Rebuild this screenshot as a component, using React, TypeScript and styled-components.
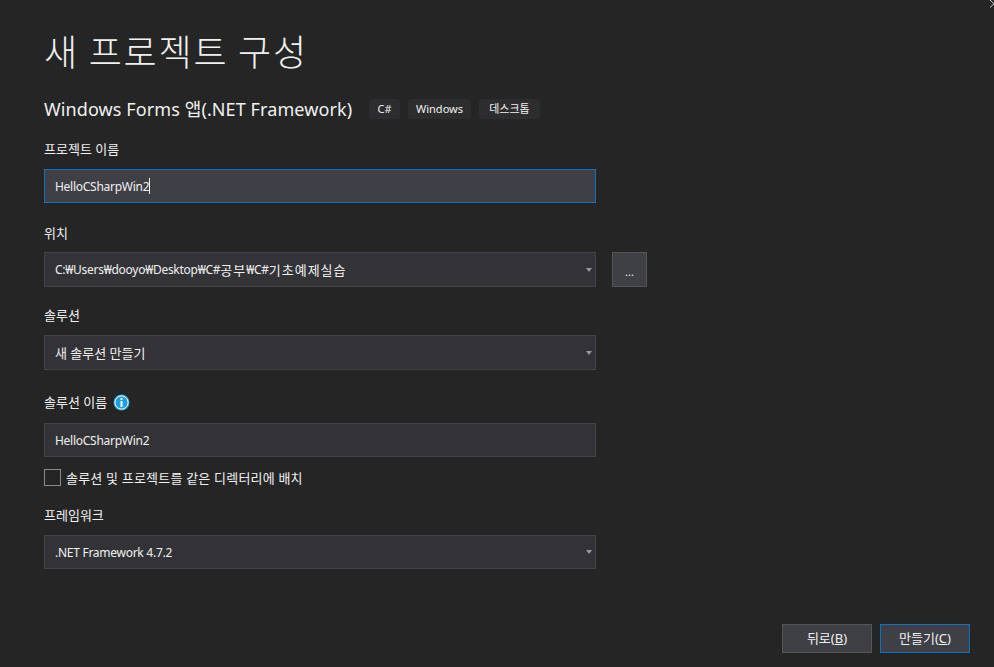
import styled, { createGlobalStyle } from "styled-components";

// styling
const GlobalStyle = createGlobalStyle`
  html, body {
    margin: 0;
    padding: 0;
    background: #252526;
  }
  body {
    font-family: "Noto Sans", "Noto Sans CJK KR", sans-serif;
    color: #f1f1f1;
  }
`;

const Page = styled.div`
  position: relative;
  width: 994px;
  height: 667px;
  box-sizing: border-box;
  padding: 26px 24px 14px 44px;
  display: flex;
  flex-direction: column;
  overflow: hidden;
  background: #252526;
`;

const CloseIcon = styled.svg`
  position: absolute;
  top: 0;
  right: 0;
  width: 8px;
  height: 10px;
`;

const Title = styled.h1`
  margin: 0;
  height: 46px;
  font-size: 36px;
  line-height: 48px;
  font-weight: 300;
  letter-spacing: 1.8px;
  font-family: "Noto Sans CJK KR", sans-serif;
`;

const TemplateRow = styled.div`
  display: flex;
  align-items: center;
  height: 24px;
  margin-top: 25px;
`;

const TemplateName = styled.div`
  width: 309px;
  font-size: 18px;
  line-height: 24px;
  margin-right: 16px;
  letter-spacing: 0.1px;
  white-space: nowrap;
`;

const Tag = styled.div<{ $width: number }>`
  width: ${(p) => p.$width}px;
  height: 20px;
  line-height: 20px;
  text-align: center;
  margin-right: 8px;
  border-radius: 3px;
  background: #2d2d30;
  font-size: 11px;
`;

const Label = styled.div<{ $top: number; $bottom?: number }>`
  display: flex;
  align-items: center;
  gap: 6px;
  height: 18px;
  line-height: 18px;
  margin-top: ${(p) => p.$top}px;
  margin-bottom: ${(p) => p.$bottom ?? 9}px;
  font-size: 13px;
`;

const FieldRow = styled.div`
  display: flex;
  align-items: center;
  gap: 16px;
`;

const Field = styled.div<{ $height: number; $focused?: boolean }>`
  position: relative;
  width: 552px;
  height: ${(p) => p.$height}px;
  box-sizing: border-box;
  display: flex;
  align-items: center;
  padding: 0 10px;
  font-size: 12px;
  letter-spacing: -0.27px;
  white-space: pre;
  background: ${(p) => (p.$focused ? "#3f3f46" : "#333337")};
  border: 1px solid ${(p) => (p.$focused ? "#0e70c0" : "#434346")};
`;

const Hangul = styled.span<{ $spacing: number }>`
  font-size: 13px;
  letter-spacing: ${(p) => p.$spacing}px;
`;

const Caret = styled.span`
  display: inline-block;
  width: 1px;
  height: 16px;
  background: #f1f1f1;
`;

const Arrow = styled.span`
  position: absolute;
  right: 3px;
  top: 50%;
  margin-top: -2px;
  width: 0;
  height: 0;
  border-left: 3.5px solid transparent;
  border-right: 3.5px solid transparent;
  border-top: 4px solid #999999;
`;

const BrowseButton = styled.div`
  width: 35px;
  height: 35px;
  box-sizing: border-box;
  display: flex;
  align-items: center;
  justify-content: center;
  padding-top: 3px;
  font-size: 11px;
  background: #3f3f46;
  border: 1px solid #555555;
`;

const CheckRow = styled.div`
  display: flex;
  align-items: center;
  gap: 5px;
  height: 18px;
  margin-top: 11px;
  font-size: 13px;
  letter-spacing: 0.2px;
`;

const Checkbox = styled.span`
  width: 17px;
  height: 17px;
  box-sizing: border-box;
  border: 1px solid #8a8a8a;
`;

const Footer = styled.div`
  display: flex;
  justify-content: flex-end;
  gap: 8px;
  margin-top: auto;
`;

const Button = styled.div<{ $primary?: boolean }>`
  width: 90px;
  height: 29px;
  box-sizing: border-box;
  display: flex;
  align-items: center;
  justify-content: center;
  padding-bottom: 2px;
  font-size: 13px;
  background: #3f3f46;
  border: 1px solid ${(p) => (p.$primary ? "#0e70c0" : "#555555")};
`;

const AccessKey = styled.span`
  text-decoration: underline;
`;

function InfoIcon() {
  return (
    <svg width="17" height="17" viewBox="0 0 17 17">
      <circle cx="8.5" cy="8.5" r="8" fill="#1f9ee3" />
      <circle cx="8.5" cy="8.5" r="6.6" fill="none" stroke="#ffffff" strokeWidth="1" />
      <rect x="7.5" y="7" width="2" height="6" fill="#ffffff" />
      <rect x="7.5" y="4" width="2" height="2" fill="#ffffff" />
    </svg>
  );
}

function App() {
  return (
    <>
      <GlobalStyle />
      <Page>
        <CloseIcon viewBox="0 0 8 10">
          <path d="M4 0L8 3.7L4 7.5" stroke="#d8d8d8" strokeWidth="1" fill="none" />
        </CloseIcon>
        <Title>새 프로젝트 구성</Title>
        <TemplateRow>
          <TemplateName>Windows Forms 앱(.NET Framework)</TemplateName>
          <Tag $width={31}>C#</Tag>
          <Tag $width={63}>Windows</Tag>
          <Tag $width={61}>데스크톱</Tag>
        </TemplateRow>

        <Label $top={19} $bottom={11}>프로젝트 이름</Label>
        <Field $height={34} $focused>
          HelloCSharpWin2
          <Caret />
        </Field>

        <Label $top={21} $bottom={10}>위치</Label>
        <FieldRow>
          <Field $height={35}>
            C:₩Users₩dooyo₩Desktop₩C#<Hangul $spacing={1}>공부</Hangul>₩C#<Hangul $spacing={1}>기초예제실습</Hangul>
            <Arrow />
          </Field>
          <BrowseButton>...</BrowseButton>
        </FieldRow>

        <Label $top={19} $bottom={11}>솔루션</Label>
        <Field $height={35}>
          <Hangul $spacing={0}>새 솔루션 만들기</Hangul>
          <Arrow />
        </Field>

        <Label $top={23} $bottom={12}>솔루션 이름 <InfoIcon /></Label>
        <Field $height={34}>HelloCSharpWin2</Field>

        <CheckRow>
          <Checkbox />
          솔루션 및 프로젝트를 같은 디렉터리에 배치
        </CheckRow>

        <Label $top={20} $bottom={11}>프레임워크</Label>
        <Field $height={34}>
          .NET Framework 4.7.2
          <Arrow />
        </Field>

        <Footer>
          <Button>뒤로(<AccessKey>B</AccessKey>)</Button>
          <Button $primary>만들기(<AccessKey>C</AccessKey>)</Button>
        </Footer>
      </Page>
    </>
  );
}

export default App;
